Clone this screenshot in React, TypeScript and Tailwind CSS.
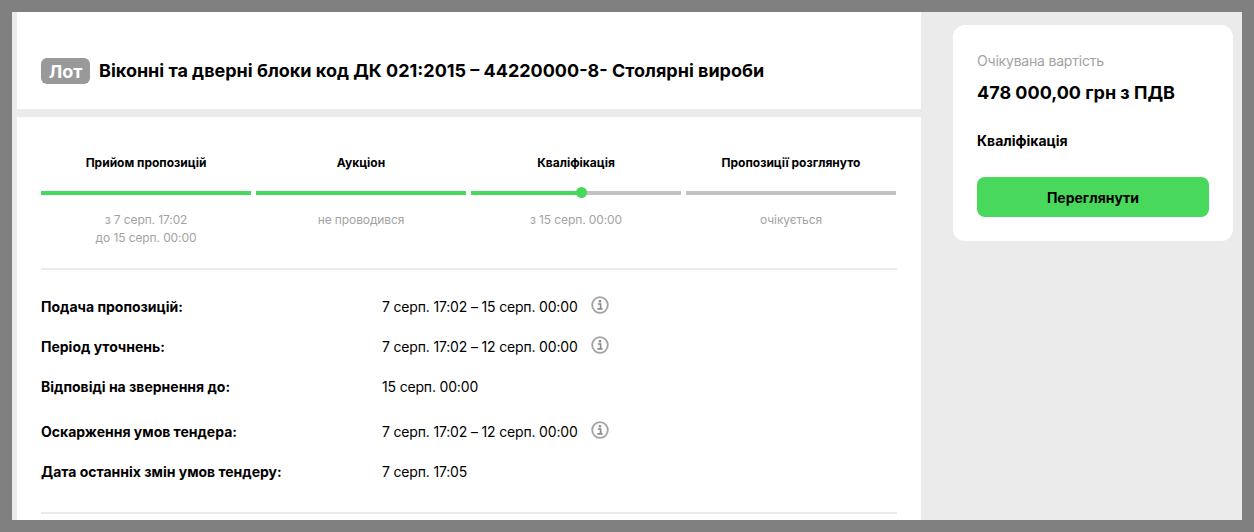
import React from 'react';

const steps = [
  { title: 'Прийом пропозицій', lines: ['з 7 серп. 17:02', 'до 15 серп. 00:00'], fill: 'full' },
  { title: 'Аукціон', lines: ['не проводився'], fill: 'full' },
  { title: 'Кваліфікація', lines: ['з 15 серп. 00:00'], fill: 'half' },
  { title: 'Пропозиції розглянуто', lines: ['очікується'], fill: 'none' },
];

const rows = [
  { label: 'Подача пропозицій:', value: '7 серп. 17:02 – 15 серп. 00:00', info: true, cls: 'h-10' },
  { label: 'Період уточнень:', value: '7 серп. 17:02 – 12 серп. 00:00', info: true, cls: 'h-10' },
  { label: 'Відповіді на звернення до:', value: '15 серп. 00:00', info: false, cls: 'h-10 mb-[5px]' },
  { label: 'Оскарження умов тендера:', value: '7 серп. 17:02 – 12 серп. 00:00', info: true, cls: 'h-10' },
  { label: 'Дата останніх змін умов тендеру:', value: '7 серп. 17:05', info: false, cls: 'h-10' },
];

const InfoIcon = () => (
  <svg className="ml-[13px] mt-[-2px] h-[18px] w-[18px]" viewBox="0 0 18 18" fill="none">
    <circle cx="9" cy="9" r="7.8" stroke="#a3a3a3" strokeWidth="1.8" />
    <circle cx="9" cy="5.2" r="1.3" fill="#8a8a8a" />
    <path d="M6.8 8h2.8v4.4M6.4 12.8h5.2" stroke="#8a8a8a" strokeWidth="1.7" />
  </svg>
);

const Step = ({ title, lines, fill }: { title: string; lines: string[]; fill: string }) => (
  <div className="flex w-[210px] flex-col items-center">
    <div className="h-[18px] text-[12px] leading-[18px] font-bold text-black">{title}</div>
    <div className="relative mt-[19px] h-1 w-full bg-[#c2c2c2]">
      {fill === 'full' && <div className="h-1 w-full bg-[#47d85c]" />}
      {fill === 'half' && (
        <>
          <div className="h-1 w-[110px] bg-[#47d85c]" />
          <div className="absolute left-[105px] top-[-4px] h-[11px] w-[11px] rounded-full bg-[#47d85c]" />
        </>
      )}
    </div>
    <div className="mt-4 text-center text-[12px] leading-[18px] tracking-[-0.1px] text-[#a3a3a3]">
      {lines.map((line) => (
        <div key={line}>{line}</div>
      ))}
    </div>
  </div>
);

export default function App() {
  return (
    <div
      className="h-[532px] w-[1254px] overflow-hidden bg-[#808080] p-3"
      style={{ fontFamily: 'Inter, "Noto Sans", sans-serif' }}
    >
      <div className="flex h-[508px] bg-[#ebebeb] pl-[5px]">
        {/* ліва колонка */}
        <div className="flex w-[904px] flex-shrink-0 flex-col gap-2">
          <div className="flex h-[97px] items-start bg-white px-6 pt-[46px]">
            <span className="flex h-[26px] w-[49px] items-center justify-center rounded-md bg-[#999999] text-[18px] font-bold text-white">
              Лот
            </span>
            <h1 className="ml-[9px] text-[18px] leading-[26px] font-bold text-black">
              Віконні та дверні блоки код ДК 021:2015 – 44220000-8- Столярні вироби
            </h1>
          </div>

          <div className="flex-1 bg-white px-6 pt-[37px]">
            <div className="flex gap-[5px]">
              {steps.map((s) => (
                <Step key={s.title} {...s} />
              ))}
            </div>
            <div className="mt-[21px] h-[2px] w-[856px] bg-[#ebebeb]" />
            <div className="pt-4">
              {rows.map((r) => (
                <div key={r.label} className={`flex items-center ${r.cls}`}>
                  <div className="w-[341px] text-[14px] font-bold text-black">{r.label}</div>
                  <div className="text-[14px] tracking-[-0.17px] text-black">{r.value}</div>
                  {r.info && <InfoIcon />}
                </div>
              ))}
            </div>
            <div className="mt-[21px] h-[2px] w-[856px] bg-[#ebebeb]" />
          </div>
        </div>

        {/* права колонка */}
        <div className="pl-8 pt-[13px]">
          <div className="flex h-[216px] w-[280px] flex-col rounded-xl bg-white px-6 pt-[27px]">
            <div className="text-[14px] leading-[18px] tracking-[-0.2px] text-[#a3a3a3]">Очікувана вартість</div>
            <div className="mt-[12px] text-[18px] leading-[22px] font-bold text-black">478 000,00 грн з ПДВ</div>
            <div className="mt-[28px] text-[14px] leading-[18px] font-bold text-black">Кваліфікація</div>
            <button className="mt-[27px] h-10 w-full rounded-lg bg-[#47d85c] text-[14px] font-bold text-black">
              Переглянути
            </button>
          </div>
        </div>
      </div>
    </div>
  );
}
